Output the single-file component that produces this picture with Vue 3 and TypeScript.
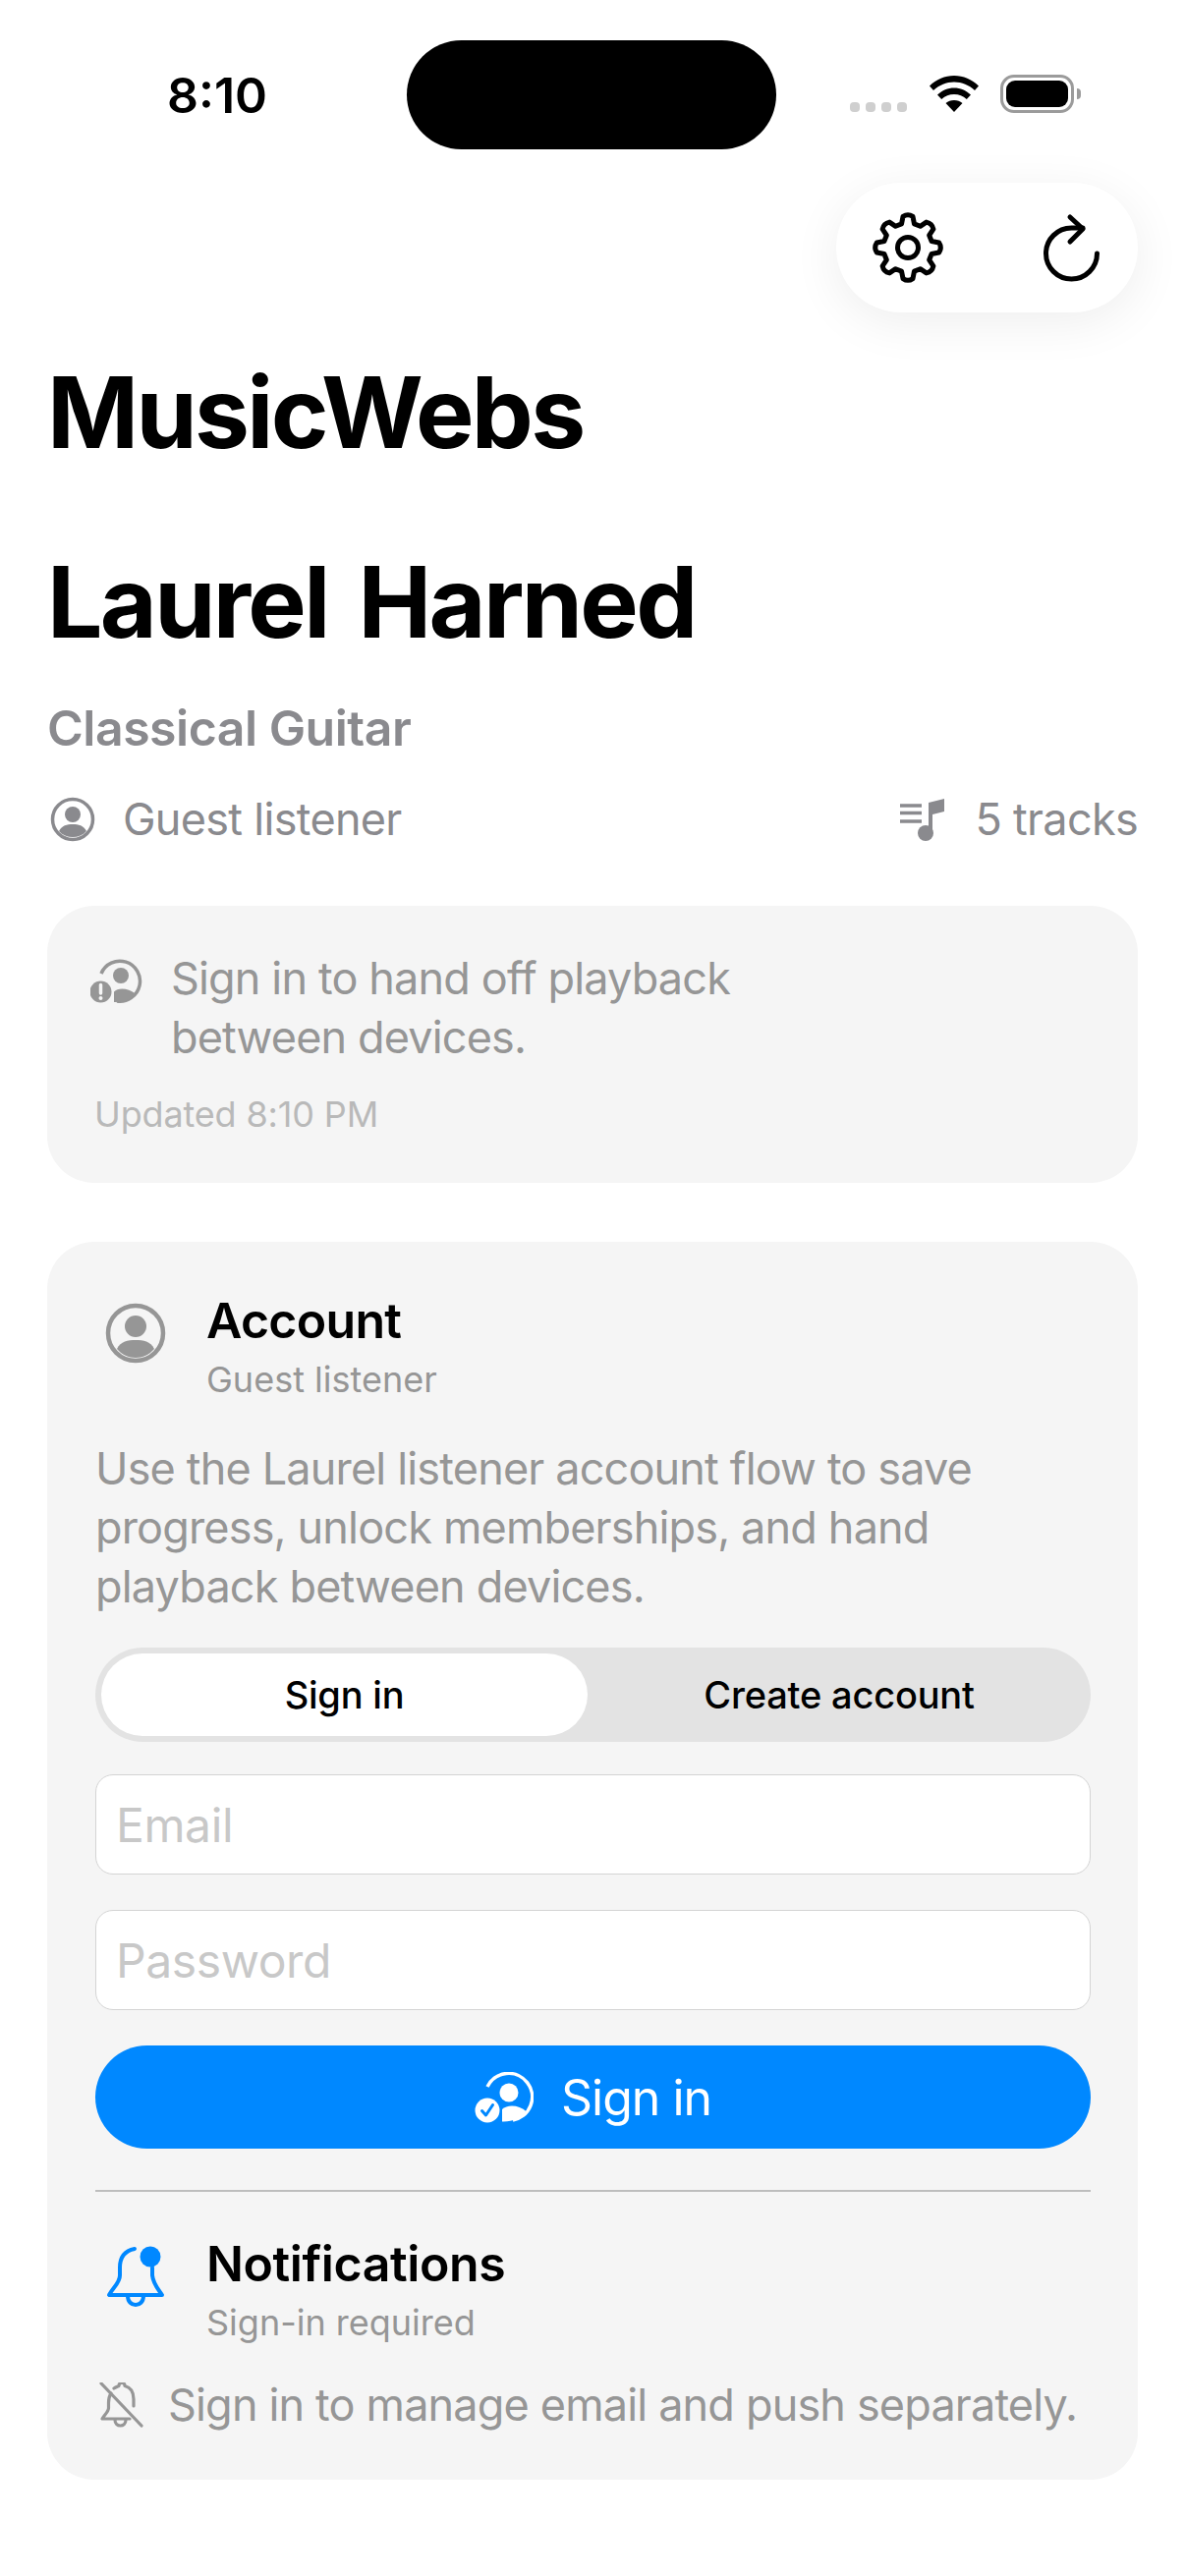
<template>
  <div class="screen">
    <div class="status-bar">
      <span class="time">8:10</span>
      <div class="island"></div>
      <div class="status-icons">
        <div class="signal">
          <i v-for="n in 4" :key="n"></i>
        </div>
        <svg class="wifi" width="50" height="37" viewBox="0 0 50 37">
          <path d="M25 0C15.500 0 7 3.700 0 10.500L4 15C10 9.500 17 6.500 25 6.500S40 9.500 46 15L50 10.500C43 3.700 34.500 0 25 0Z" fill="#000" />
          <path d="M25 12.500C18.500 12.500 13 15 8 19.500L12.200 24C16 20.700 20 19 25 19S34 20.700 37.800 24L42 19.500C37 15 31.500 12.500 25 12.500Z" fill="#000" />
          <path d="M25 25C21.500 25 19 26 16.500 28L25 37L33.500 28C31 26 28.500 25 25 25Z" fill="#000" />
        </svg>
        <div class="battery"><div class="battery-fill"></div></div>
        <div class="battery-cap"></div>
      </div>
    </div>

    <div class="toolbar-row">
      <div class="toolbar">
        <svg width="76" height="76" viewBox="0 0 76 76" fill="none" stroke="#000" stroke-width="5" stroke-linejoin="round">
          <path :d="gearPath" />
          <circle cx="38" cy="38" r="10.500" />
        </svg>
        <svg width="64" height="76" viewBox="0 0 64 76" fill="none" stroke="#000" stroke-width="5" stroke-linecap="round" stroke-linejoin="round">
          <path d="M58.500 44A26 26 0 1 1 32.500 18H44" />
          <path d="M31 7L44 19L31 32" />
        </svg>
      </div>
    </div>

    <h1 class="app-title">MusicWebs</h1>
    <h1 class="artist">Laurel Harned</h1>
    <p class="genre">Classical Guitar</p>

    <div class="meta">
      <div class="meta-item">
        <svg class="meta-icon" width="46" height="46" viewBox="0 0 46 46">
          <circle cx="23" cy="23" r="20.500" fill="none" stroke="#8a8a8e" stroke-width="3.500" />
          <circle cx="23" cy="18" r="8" fill="#8a8a8e" />
          <path d="M9 35C12 29 17 28 23 28S34 29 37 35C33.500 39 28.500 41 23 41S12.500 39 9 35Z" fill="#8a8a8e" />
        </svg>
        <span>Guest listener</span>
      </div>
      <div class="meta-item">
        <svg class="meta-icon tracks" width="48" height="46" viewBox="0 0 48 46">
          <path d="M0 9H22M0 16.500H22M0 25H22" stroke="#8a8a8e" stroke-width="3.500" fill="none" />
          <path d="M29 36V6L45 2V15L33 18V36" fill="#8a8a8e" />
          <circle cx="26" cy="37" r="8" fill="#8a8a8e" />
        </svg>
        <span>5 tracks</span>
      </div>
    </div>

    <section class="card notice">
      <div class="notice-row">
        <svg class="notice-icon" width="54" height="46" viewBox="0 0 54 46">
          <path d="M11 15A20.500 20.500 0 1 1 27 43" fill="none" stroke="#969696" stroke-width="3.500" />
          <circle cx="31" cy="17" r="8" fill="#969696" />
          <path d="M24 44V33.500C28 29 38 29 46.500 36C41 41.500 33 44.500 24 44Z" fill="#969696" />
          <circle cx="10.500" cy="33.500" r="11" fill="#969696" />
          <path d="M10.500 26.500V35" stroke="#f5f5f5" stroke-width="3.500" stroke-linecap="round" />
          <circle cx="10.500" cy="40" r="2" fill="#f5f5f5" />
        </svg>
        <p class="notice-text">Sign in to hand off playback<br />between devices.</p>
      </div>
      <p class="updated">Updated 8:10 PM</p>
    </section>

    <section class="card account">
      <div class="heading">
        <svg class="heading-icon" width="62" height="62" viewBox="0 0 62 62">
          <circle cx="31" cy="31" r="28" fill="none" stroke="#969696" stroke-width="4.500" />
          <circle cx="31" cy="24" r="11" fill="#969696" />
          <path d="M12 47C16 39 23 38 31 38S46 39 50 47C45 53 38 56 31 56S17 53 12 47Z" fill="#969696" />
        </svg>
        <div>
          <h2 class="account-title">Account</h2>
          <p class="sub">Guest listener</p>
        </div>
      </div>

      <p class="body-text">Use the Laurel listener account flow to save progress, unlock memberships, and hand playback between devices.</p>

      <div class="segment">
        <button
          v-for="opt in modes"
          :key="opt"
          :class="['segment-btn', { active: mode === opt }]"
          @click="mode = opt"
        >
          {{ opt }}
        </button>
      </div>

      <input v-model="email" class="field first" type="email" placeholder="Email" />
      <input v-model="password" class="field" type="password" placeholder="Password" />

      <button class="submit">
        <svg width="60" height="52" viewBox="0 0 60 52">
          <path d="M13 15A24 24 0 1 1 39 49" fill="none" stroke="#fff" stroke-width="3.500" />
          <circle cx="35" cy="21" r="9.500" fill="#fff" />
          <path d="M28 50.500V38C33 33 45 33 53 40.500C47 47 38 51 28 50.500Z" fill="#fff" />
          <circle cx="13" cy="39" r="12.500" fill="#fff" />
          <path d="M7.500 39.500L11.500 44L18.500 33.500" fill="none" stroke="#0088ff" stroke-width="3" stroke-linecap="round" stroke-linejoin="round" />
        </svg>
        <span>Sign in</span>
      </button>

      <div class="divider"></div>

      <div class="heading notifications">
        <svg class="heading-icon" width="62" height="64" viewBox="0 0 62 64">
          <path d="M30 3C20 5 15 12 15 22V30C15 38 8 42 4 50H58C54 44 49 39 48 30V22" fill="none" stroke="#0088ff" stroke-width="4" stroke-linecap="round" stroke-linejoin="round" />
          <path d="M23 51C23 63 39 63 39 51" fill="none" stroke="#0088ff" stroke-width="4" />
          <circle cx="46" cy="11" r="10.500" fill="#0088ff" />
        </svg>
        <div>
          <h2>Notifications</h2>
          <p class="sub">Sign-in required</p>
        </div>
      </div>

      <div class="note">
        <svg width="46" height="46" viewBox="0 0 46 46" fill="none" stroke="#969696" stroke-width="3.200" stroke-linecap="round" stroke-linejoin="round">
          <path d="M12 11C10 14 9.500 17 9.500 21V26C9.500 30 5 33 3 37H31" />
          <path d="M15 6C17 4.500 19 4 20 3.500C20 -0.500 26 -0.500 26 3.500C32 5 35 10 35 17V24" />
          <path d="M16 38C16 46 27 46 27 38" />
          <path d="M2 1L43 44" />
        </svg>
        <span>Sign in to manage email and push separately.</span>
      </div>
    </section>
  </div>
</template>

<script setup lang="ts">
import { ref } from 'vue';

const modes = ['Sign in', 'Create account'];
const mode = ref('Sign in');
const email = ref('');
const password = ref('');

// eight rounded teeth round a 76px box
const buildGear = (): string => {
  const cx = 38;
  const cy = 38;
  const pt = (r: number, deg: number) => {
    const a = ((deg - 90) * Math.PI) / 180;
    return `${(cx + r * Math.cos(a)).toFixed(1)} ${(cy + r * Math.sin(a)).toFixed(1)}`;
  };
  let d = '';
  for (let i = 0; i < 8; i++) {
    const t = i * 45;
    d += `${i === 0 ? 'M' : 'L'}${pt(25, t - 15)}`;
    d += `L${pt(32, t - 9)}Q${pt(35, t)} ${pt(32, t + 9)}`;
    d += `L${pt(25, t + 15)}`;
  }
  return d + 'Z';
};
const gearPath = buildGear();
</script>

<style>
html,
body {
  margin: 0;
  background: #fff;
}
</style>

<style scoped>
.screen {
  width: 1206px;
  height: 2622px;
  box-sizing: border-box;
  padding: 41px 48px 0;
  background: #fff;
  color: #000;
  font-family: Inter, 'Noto Sans', sans-serif;
  overflow: hidden;
}

/* Status bar */
.status-bar {
  display: flex;
  align-items: center;
  height: 111px;
  margin-right: -48px;
}
.time {
  width: 366px;
  padding-left: 122px;
  box-sizing: border-box;
  font-size: 50px;
  font-weight: 600;
  line-height: 60px;
}
.island {
  width: 376px;
  height: 111px;
  border-radius: 56px;
  background: #000;
}
.status-icons {
  display: flex;
  align-items: flex-start;
  margin-left: 75px;
  height: 40px;
  margin-top: -1px;
}
.signal {
  display: flex;
  gap: 6px;
  margin-top: 28px;
}
.signal i {
  width: 10px;
  height: 10px;
  border-radius: 4px;
  background: #cfcfcf;
}
.wifi {
  margin: 1px 0 0 23px;
}
.battery {
  box-sizing: border-box;
  width: 75px;
  height: 39px;
  margin-left: 22px;
  padding: 3px;
  border: 3px solid #9b9b9b;
  border-radius: 14px;
}
.battery-fill {
  width: 100%;
  height: 100%;
  border-radius: 9px;
  background: #000;
}
.battery-cap {
  width: 4px;
  height: 11px;
  margin: 14px 0 0 3px;
  border-radius: 0 4px 4px 0;
  background: #9b9b9b;
}

/* Toolbar */
.toolbar-row {
  display: flex;
  justify-content: flex-end;
  margin-top: 34px;
}
.toolbar {
  box-sizing: border-box;
  display: flex;
  align-items: center;
  justify-content: space-between;
  width: 307px;
  height: 132px;
  padding: 0 36px 0 35px;
  border-radius: 66px;
  background: #fff;
  box-shadow: 0 10px 50px rgba(0, 0, 0, 0.07);
}

/* Headings */
.app-title,
.artist {
  margin: 0;
  font-size: 100px;
  font-weight: 700;
  line-height: 120px;
  letter-spacing: -2.7px;
}
.app-title {
  margin-top: 42px;
}
.artist {
  margin-top: 73px;
  word-spacing: 10px;
}
.genre {
  margin: 38px 0 0;
  font-size: 50px;
  font-weight: 600;
  line-height: 60px;
  letter-spacing: -0.5px;
  color: #8a8a8e;
}
.meta {
  display: flex;
  justify-content: space-between;
  margin-top: 33px;
  font-size: 45px;
  line-height: 60px;
  letter-spacing: -0.7px;
  color: #8a8a8e;
}
.meta-item {
  display: flex;
  align-items: center;
  gap: 28px;
}
.meta-item:first-child {
  padding-left: 3px;
}

/* Cards */
.card {
  box-sizing: border-box;
  border-radius: 48px;
  background: #f5f5f5;
}
.notice {
  height: 282px;
  margin-top: 58px;
  padding: 44px 48px 0 44px;
}
.notice-row {
  display: flex;
  gap: 28px;
}
.notice-icon {
  flex: none;
  margin-top: 10px;
}
.notice-text {
  margin: 0;
  font-size: 45px;
  line-height: 60px;
  letter-spacing: -0.85px;
  color: #969696;
}
.updated {
  margin: 26px 0 0 4px;
  font-size: 36px;
  line-height: 44px;
  letter-spacing: -0.15px;
  color: #b9b9b9;
}
.account {
  height: 1260px;
  margin-top: 60px;
  padding: 50px 48px 0 49px;
}
.heading {
  display: flex;
  gap: 41px;
  padding-left: 10px;
}
.heading-icon {
  flex: none;
  margin-top: 12px;
}
h2 {
  margin: 0;
  font-size: 50px;
  font-weight: 600;
  line-height: 60px;
  letter-spacing: -0.4px;
}
.account-title {
  letter-spacing: -0.7px;
}
.sub {
  margin: 8px 0 0;
  font-size: 36px;
  line-height: 44px;
  color: #969696;
}
.body-text {
  margin: 39px 0 0;
  font-size: 45px;
  line-height: 60px;
  letter-spacing: -0.83px;
  color: #969696;
}

/* Segmented control */
.segment {
  display: flex;
  box-sizing: border-box;
  height: 96px;
  margin-top: 32px;
  padding: 6px;
  border-radius: 48px;
  background: #e3e3e3;
}
.segment-btn {
  flex: 1;
  padding: 0 0 0 6px;
  border: none;
  border-radius: 42px;
  background: transparent;
  color: #000;
  font-family: inherit;
  font-size: 38px;
  font-weight: 500;
  letter-spacing: -0.2px;
}
.segment-btn.active {
  flex: none;
  width: 495px;
  padding: 0;
  background: #fff;
}

/* Form */
.field {
  display: block;
  box-sizing: border-box;
  width: 100%;
  height: 102px;
  margin-top: 36px;
  padding: 0 20px;
  border: 1.500px solid #d4d4d4;
  border-radius: 18px;
  background: #fff;
  font-family: inherit;
  font-size: 48px;
  letter-spacing: -0.4px;
  outline: none;
}
.field.first {
  margin-top: 33px;
}
.field::placeholder {
  color: #c8c8c8;
}
.submit {
  display: flex;
  align-items: center;
  justify-content: center;
  gap: 28px;
  width: 100%;
  height: 105px;
  margin-top: 36px;
  border: none;
  border-radius: 53px;
  background: #0088ff;
  color: #fff;
  font-family: inherit;
  font-size: 50px;
  letter-spacing: -1px;
}
.divider {
  height: 1.500px;
  margin-top: 42px;
  background: #bdbdbd;
}
.notifications {
  margin-top: 43px;
}
.note {
  display: flex;
  align-items: center;
  gap: 24px;
  margin-top: 32px;
  padding-left: 4px;
  font-size: 45px;
  line-height: 60px;
  letter-spacing: -0.83px;
  white-space: nowrap;
  color: #969696;
}
</style>
